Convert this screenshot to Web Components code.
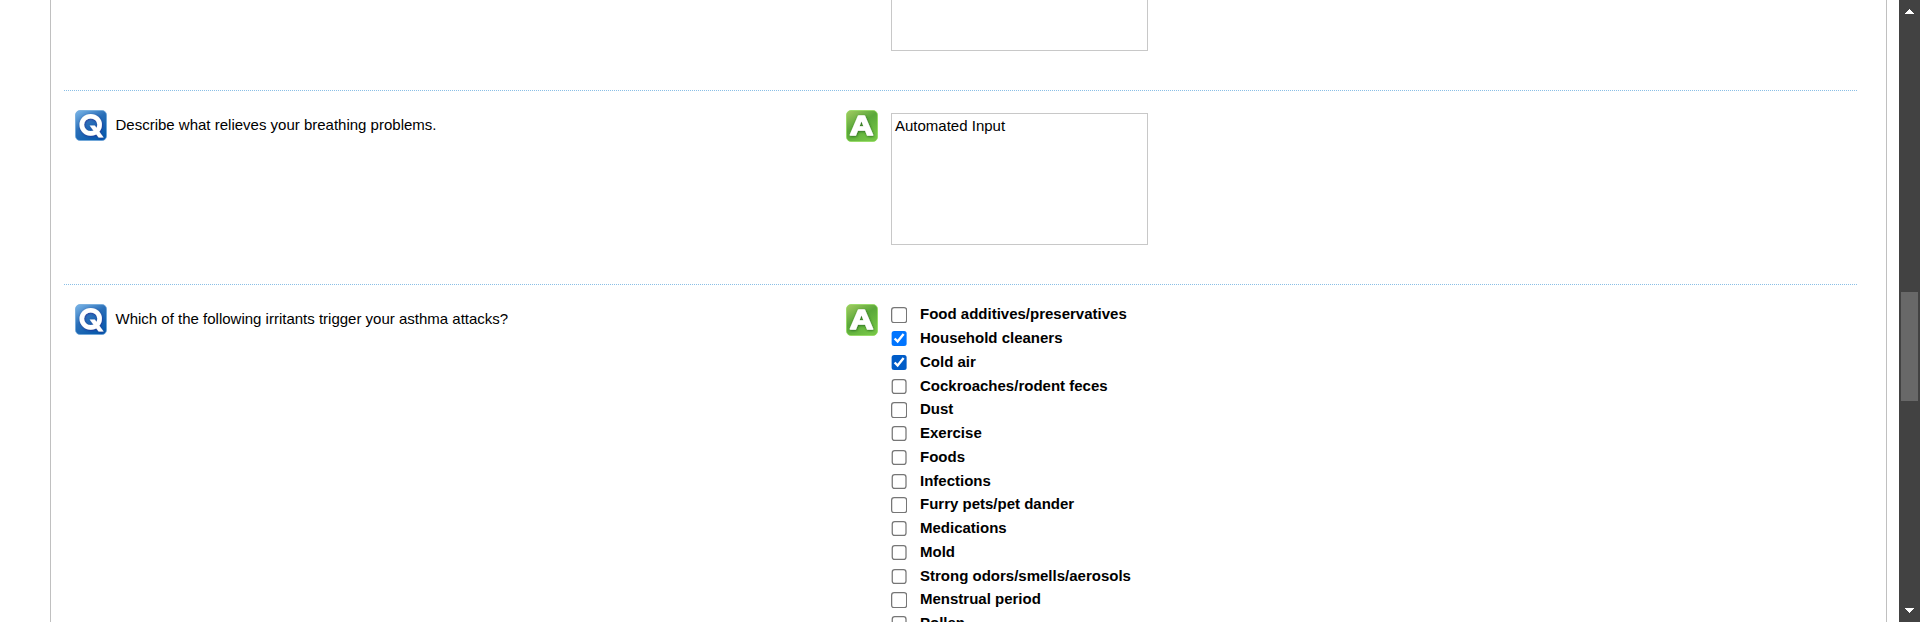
<!DOCTYPE html>
<html lang="en">
<head>
<meta charset="utf-8">
<title>Questionnaire</title>
<style>
html,body{margin:0;height:100%;overflow:hidden;background:#fff}
body{font:15px "Liberation Sans",Arial,sans-serif;color:#000}
</style>
</head>
<body>
<survey-page>
  <survey-row style="--h:90px;--pad:0px">
    <text-answer slot="answer" style="--h:51px;--top:0"></text-answer>
  </survey-row>
  <survey-row marked style="--h:193px">
    <span slot="question">Describe what relieves your breathing problems.</span>
    <text-answer slot="answer" style="--h:132px;--mt:3px">Automated Input</text-answer>
  </survey-row>
  <survey-row marked style="--h:420px">
    <span slot="question">Which of the following irritants trigger your asthma attacks?</span>
    <check-list slot="answer">
      <check-item>Food additives/preservatives</check-item>
      <check-item checked>Household cleaners</check-item>
      <check-item checked style="--accent:#005cc8">Cold air</check-item>
      <check-item>Cockroaches/rodent feces</check-item>
      <check-item>Dust</check-item>
      <check-item>Exercise</check-item>
      <check-item>Foods</check-item>
      <check-item>Infections</check-item>
      <check-item>Furry pets/pet dander</check-item>
      <check-item>Medications</check-item>
      <check-item>Mold</check-item>
      <check-item>Strong odors/smells/aerosols</check-item>
      <check-item>Menstrual period</check-item>
      <check-item>Pollen</check-item>
    </check-list>
  </survey-row>
</survey-page>
<script>
const define = (name, html) => customElements.define(name, class extends HTMLElement {
  constructor() {
    super();
    const t = document.createElement('template');
    t.innerHTML = html;
    this.attachShadow({mode: 'open'}).append(t.content.cloneNode(true));
  }
});

define('survey-page', `
<style>
:host{display:flex;height:622px;overflow:hidden;background:#fff}
main{box-sizing:border-box;width:1837px;margin:0 12px 0 50px;padding:0 28px 0 13px;border:solid #c0c0c0;border-width:0 1px;overflow:hidden}
</style>
<main><slot></slot></main>
<scroll-bar></scroll-bar>`);

define('scroll-bar', `
<style>
:host{box-sizing:border-box;width:21px;height:622px;background:#424242;display:grid;grid-template-rows:283px 109px 1fr;padding:9px 2px}
svg{display:block;margin-left:4px}
svg:last-child{align-self:end}
i{width:17px;background:#686868}
</style>
<svg width="9" height="5" shape-rendering="crispEdges"><path fill="#fff" d="M4 0h1v1h1v1h1v1h1v1h1v1H0V4h1V3h1V2h1V1h1z"/></svg>
<i></i>
<svg width="9" height="5" shape-rendering="crispEdges"><path fill="#fff" d="M0 0h9v1H8v1H7v1H6v1H5v1H4V4H3V3H2V2H1V1H0z"/></svg>`);

define('survey-row', `
<style>
:host{display:flow-root}
.row{display:grid;grid-template-columns:41px 730px 41px 1fr;height:var(--h);padding:var(--pad,19px) 0 0 11px;box-sizing:border-box;overflow:hidden}
.line{height:1px;background:repeating-linear-gradient(90deg,#8abfe6 0 1px,#fff 1px 2px)}
.q{padding-top:5px;line-height:20px;margin-left:-.5px}
.a{padding-left:4px}
badge-icon{visibility:hidden}
:host([marked]) badge-icon{visibility:visible}
:host(:not([marked])) .line{display:none}
</style>
<div class="line"></div>
<div class="row"><badge-icon kind="Q"></badge-icon><div class="q"><slot name="question"></slot></div><badge-icon kind="A"></badge-icon><div class="a"><slot name="answer"></slot></div></div>`);

customElements.define('badge-icon', class extends HTMLElement {
  connectedCallback() {
    const q = this.getAttribute('kind') === 'Q';
    if (!this.shadowRoot) this.attachShadow({mode: 'open'});
    const c = q ? ['#7db8ea', '#2a6fb8', '#0a5cad', '#1d2f96'] : ['#a4cc62', '#5aa83a', '#74c446', '#286b1c'];
    this.shadowRoot.innerHTML = `
<style>:host{display:block;width:32px;height:32px}svg{display:block}text{font:bold 28px "Liberation Sans",Arial,sans-serif}</style>
<svg width="32" height="32" viewBox="0 0 32 32">
<defs><linearGradient id="g" x2=".65" y2="1"><stop stop-color="${c[0]}"/><stop offset=".5" stop-color="${c[1]}"/><stop offset="1" stop-color="${c[2]}"/></linearGradient>
<filter id="s" x="-30%" y="-30%" width="160%" height="160%"><feDropShadow dx=".5" dy=".8" stdDeviation="1.1" flood-color="${c[3]}"/></filter></defs>
<rect x=".5" y=".5" width="31" height="${q ? 30 : 31}" rx="4.5" fill="url(#g)" stroke="${q ? '#6ba6da' : '#8ed957'}" stroke-opacity=".75"/>
${q ? `<g filter="url(#s)" fill="none" stroke="#fff"><ellipse cx="15.7" cy="14.8" rx="8.9" ry="8.6" stroke-width="4.6"/><path d="M14.6 15.6h5.2L28.6 27.4h-5z" fill="#fff" stroke="none"/></g>`
    : `<g filter="url(#s)"><text x="15.6" y="24.8" text-anchor="middle" textLength="23.5" lengthAdjust="spacingAndGlyphs" fill="#fff" stroke="#fff" stroke-width="1.6" stroke-linejoin="round">A</text></g>`}
</svg>`;
  }
});

define('text-answer', `
<style>
:host{display:block;box-sizing:border-box;width:257px;height:var(--h);margin-top:var(--mt,0);border:1px solid #c8c8c8;border-top-width:var(--top,1px);padding:3px;line-height:18px}
</style><slot></slot>`);

define('check-list', `<style>:host{display:block;padding-top:1.3px}</style><slot></slot>`);

customElements.define('check-item', class extends HTMLElement {
  connectedCallback() {
    if (!this.shadowRoot) this.attachShadow({mode: 'open'});
    this.shadowRoot.innerHTML = `
<style>
:host{display:block;height:23.75px;font-weight:bold}
label{display:flex;align-items:flex-start;line-height:18px}
input{zoom:1.25;width:13px;height:13px;margin:1.6px 10px 0 .2px;flex:none;accent-color:var(--accent,#0075ff)}
</style>
<label><input type="checkbox" ${this.hasAttribute('checked') ? 'checked' : ''}><span><slot></slot></span></label>`;
  }
});
</script>
</body>
</html>
